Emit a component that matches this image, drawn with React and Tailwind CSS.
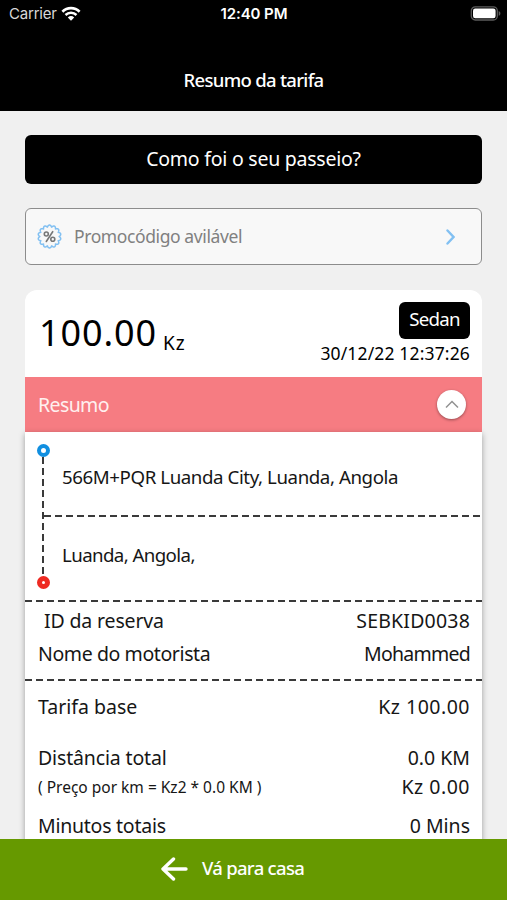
const FARE_ROWS = [
  { label: "Tarifa base", value: "Kz 100.00", row: "h-[53px]", valueTrack: "tracking-[0.5px]" },
  {
    label: "Distância total",
    value: "0.0 KM",
    row: "h-[29px] mt-[10px]",
    track: "tracking-[-0.15px]",
  },
];

// wavy outline of the promo badge
const BADGE_PATH =
  Array.from({ length: 169 }, (_, i) => {
    const a = (i / 168) * Math.PI * 2;
    const r = 9.6 + Math.abs(Math.cos(a * 7)) * 1.9;
    return `${i ? "L" : "M"}${(12.5 + r * Math.sin(a)).toFixed(2)} ${(12.5 - r * Math.cos(a)).toFixed(2)}`;
  }).join("") + "Z";

function WifiIcon() {
  return (
    <svg width="20" height="16" viewBox="0 0 20 16" fill="none" stroke="white">
      <path d="M1.400 5.700a12.300 12.300 0 0 1 17.200 0" strokeWidth="2.700" />
      <path d="M4.500 9a7.900 7.900 0 0 1 11 0" strokeWidth="2.500" />
      <path d="M10 14.800 6.800 11.400a4.700 4.700 0 0 1 6.400 0Z" fill="white" stroke="none" />
    </svg>
  );
}

function BatteryIcon() {
  return (
    <svg className="-mt-0.5" width="31" height="15" viewBox="0 0 31 15" fill="none">
      <rect x="1.300" y="0.800" width="26" height="13.200" rx="4" stroke="#5c5c5c" strokeWidth="1.300" />
      <rect x="3" y="2.600" width="22.600" height="9.600" rx="2.200" fill="white" />
      <path d="M28.700 5v4.800c1-.4 1.700-1.300 1.700-2.400S29.700 5.400 28.700 5Z" fill="#5c5c5c" />
    </svg>
  );
}

function PromoIcon() {
  return (
    <svg width="25" height="25" viewBox="0 0 25 25" fill="none">
      <path d={BADGE_PATH} stroke="#82c0f2" strokeWidth="1.500" strokeLinejoin="round" />
      <g stroke="#777" strokeWidth="1.600" strokeLinecap="round">
        <path d="m15.700 7.700-6.400 9.800" />
        <circle cx="9.300" cy="10" r="2" />
        <circle cx="15.800" cy="15.300" r="2" />
      </g>
    </svg>
  );
}

function DashedLine() {
  return (
    <div className="h-[2px] w-full shrink-0 bg-[repeating-linear-gradient(to_right,#3a3a3a_0px,#3a3a3a_7px,transparent_7px,transparent_11px)]" />
  );
}

function Row({ label, value, row, track, valueTrack }) {
  return (
    <div className={`flex items-center justify-between pr-3 pl-[13px] ${row}`}>
      <span className={track}>{label}</span>
      <span className={valueTrack}>{value}</span>
    </div>
  );
}

function Header() {
  return (
    <header className="h-[111px] shrink-0 bg-black text-white">
      <div className="grid h-7 grid-cols-3 items-center pr-1.5 pl-[9px] font-['Inter',sans-serif] text-[15px]">
        <div className="flex items-center gap-1">
          <span className="tracking-[-0.2px] text-[#d8d8d8]">Carrier</span>
          <WifiIcon />
        </div>
        <span className="pr-0.5 text-center font-semibold tracking-[-0.1px]">12:40 PM</span>
        <div className="flex justify-end">
          <BatteryIcon />
        </div>
      </div>
      <h1 className="mt-[38px] text-center text-[18.5px] leading-7 font-medium tracking-[-0.7px]">
        Resumo da tarifa
      </h1>
    </header>
  );
}

function Summary() {
  return (
    <section className="h-[460px] bg-white shadow-[0_2px_6px_rgba(0,0,0,0.35)]">
      <div className="flex h-[168px]">
        <div className="flex w-[19px] shrink-0 flex-col items-end pt-3 pb-[11px]">
          <span className="-mr-1.5 size-[13px] shrink-0 rounded-full border-4 border-[#118fe0] bg-white" />
          <span className="w-[2px] flex-1 bg-[repeating-linear-gradient(to_bottom,#3a3a3a_0px,#3a3a3a_7px,transparent_7px,transparent_11px)]" />
          <span className="-mr-1.5 size-[13px] shrink-0 rounded-full border-5 border-[#ee2a22] bg-white" />
        </div>
        <div className="flex flex-1 flex-col pr-0.5 text-[18.7px]">
          <p className="flex h-[83px] items-center pt-1.5 pl-[18px] tracking-[-0.42px]">
            566M+PQR Luanda City, Luanda, Angola
          </p>
          <DashedLine />
          <p className="flex h-[76px] items-center pl-[18px] tracking-[-0.6px]">Luanda, Angola,</p>
        </div>
      </div>
      <DashedLine />
      <div className="pt-0.5">
        <Row
          label="ID da reserva"
          value="SEBKID0038"
          row="h-[33px] [&>span:first-child]:ml-1.5"
          track="tracking-[-0.15px]"
          valueTrack="tracking-[0.2px]"
        />
        <Row
          label="Nome do motorista"
          value="Mohammed"
          row="h-[33px] mb-[9px]"
          track="tracking-[-0.4px]"
          valueTrack="tracking-[-0.75px]"
        />
      </div>
      <DashedLine />
      <div className="-mt-px">
        {FARE_ROWS.map((item) => (
          <Row key={item.label} {...item} />
        ))}
        <div className="flex h-[29px] items-center justify-between pr-3 pl-[13px]">
          <span className="text-[15.5px]">( Preço por km = Kz2 * 0.0 KM )</span>
          <span className="tracking-[0.5px]">Kz 0.00</span>
        </div>
        <Row label="Minutos totais" value="0 Mins" row="h-[29px] mt-[10px]" track="tracking-[-0.25px]" />
      </div>
    </section>
  );
}

export default function App() {
  return (
    <div className="flex h-[900px] w-full flex-col overflow-hidden bg-[#f0f0f0] font-['Noto_Sans',sans-serif] text-[19.5px] leading-7 whitespace-nowrap text-[#161616]">
      <Header />
      <main className="min-h-0 flex-1 overflow-hidden px-[25px] pt-6">
        <button className="flex h-[49px] w-full items-center justify-center rounded-md bg-black pb-0.5 tracking-[-0.24px] text-white">
          Como foi o seu passeio?
        </button>
        <button className="mt-6 flex h-[57px] w-full items-center rounded-md border border-[#8c8c8c] bg-[#f8f8f8] pr-[26px] pl-[11px]">
          <PromoIcon />
          <span className="ml-3 pb-0.5 text-[17.5px] tracking-[-0.4px] text-[#808080]">Promocódigo avilável</span>
          <svg className="ml-auto" width="10" height="16" viewBox="0 0 10 16" fill="none" stroke="#82c0f2" strokeWidth="2.400">
            <path d="m2.500 1.500 6 6.500-6 6.500" strokeLinecap="round" />
          </svg>
        </button>
        <section className="mt-[25px] flex h-[87px] justify-between rounded-t-xl bg-white pr-3 pl-[14px] text-black">
          <div className="flex items-baseline gap-1.5">
            <span className="text-[36px] leading-[86px] tracking-[0.9px]">100.00</span>
            <span className="relative top-1 text-[19px] tracking-[1px]">Kz</span>
          </div>
          <div className="flex flex-col items-end pt-3">
            <span className="flex h-[37px] w-[71px] items-center justify-center rounded-md bg-black pb-1 text-[18.7px] tracking-[-0.8px] text-white">
              Sedan
            </span>
            <span className="text-[17.5px] tracking-[0.15px]">30/12/22 12:37:26</span>
          </div>
        </section>
        <div className="flex h-[55px] items-center justify-between bg-[#f67c82] pr-4 pl-[13px]">
          <span className="tracking-[-0.6px] text-[#fff0ef]">Resumo</span>
          <span className="flex size-[29px] items-center justify-center rounded-full bg-white shadow-[0_1px_3px_rgba(0,0,0,0.4)]">
            <svg width="14" height="9" viewBox="0 0 14 9" fill="none" stroke="#929292" strokeWidth="1.500">
              <path d="m1 7.500 6-6 6 6" />
            </svg>
          </span>
        </div>
        <Summary />
      </main>
      <footer className="flex h-[61px] shrink-0 items-center justify-center gap-[14px] bg-[#669900] pr-[42px] pb-px text-white">
        <svg width="27" height="24" viewBox="0 0 27 24" fill="none" stroke="white" strokeWidth="3.400" strokeLinecap="round" strokeLinejoin="round">
          <path d="M12.500 2 2 12l10.500 10M2.500 12H25" />
        </svg>
        <span className="pb-0.5 text-[18.5px] font-medium tracking-[-0.7px]">Vá para casa</span>
      </footer>
    </div>
  );
}
